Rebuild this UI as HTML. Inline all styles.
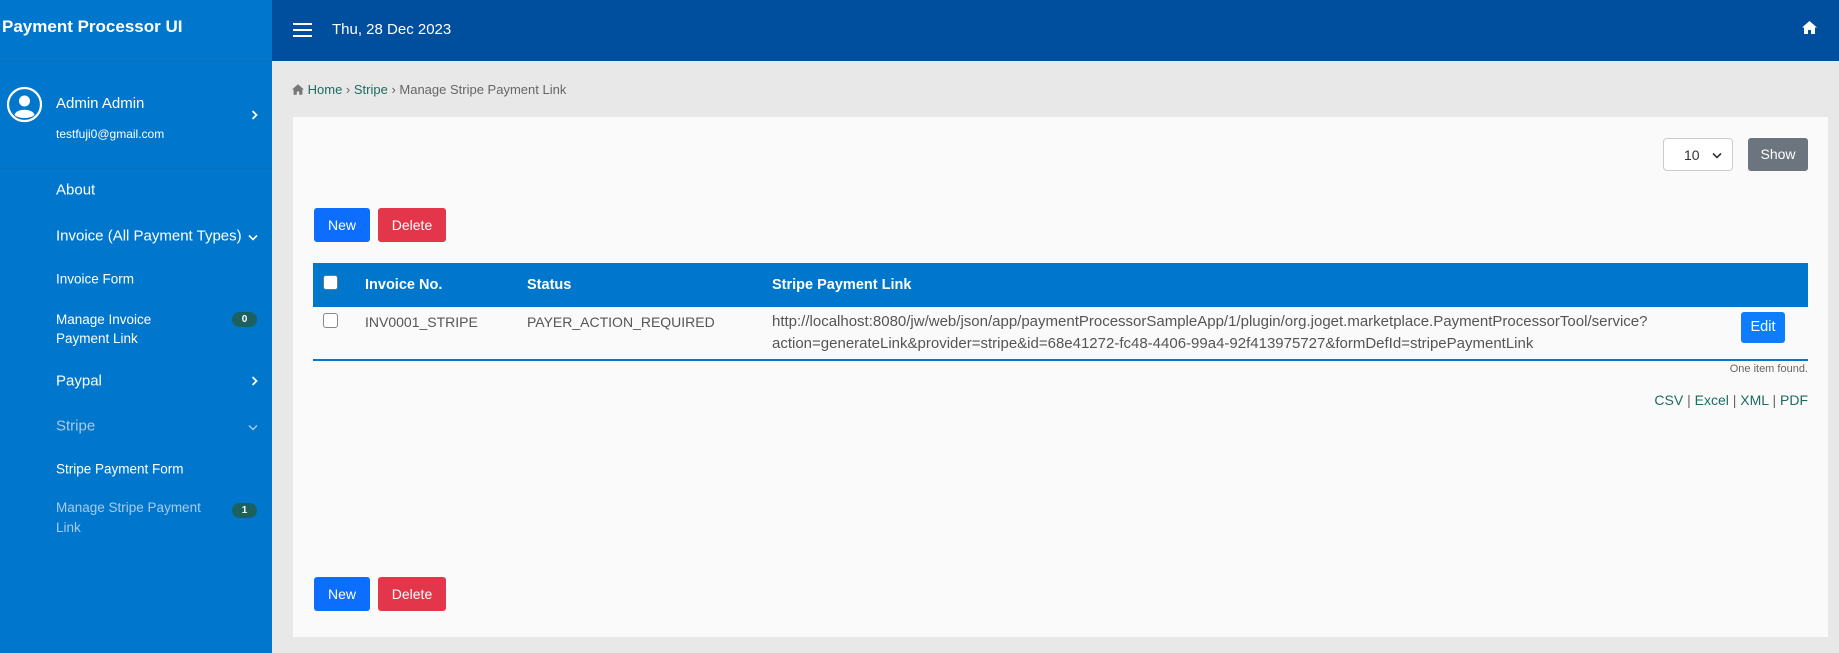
<!DOCTYPE html>
<html><head><meta charset="utf-8"><style>
*{box-sizing:border-box;margin:0;padding:0}
body{width:1839px;height:653px;overflow:hidden;font-family:"Liberation Sans",sans-serif;background:#e8e8e8;position:relative}
.abs{position:absolute;white-space:nowrap}
#side{position:absolute;left:0;top:0;width:272px;height:653px;background:#0077cc;color:#fff}
#top{position:absolute;left:272px;top:0;right:0;height:61px;background:#004e9e;color:#fff}
.mi{position:absolute;left:56px;font-size:15px;color:#fff;transform:translateY(-50%)}
.sub{font-size:13.5px}
.badge{position:absolute;left:232px;width:25px;height:15px;border-radius:8px;background:#1d6060;color:#fff;font-size:10px;font-weight:bold;text-align:center;line-height:15px}
.btn{position:absolute;color:#fff;font-size:14px;text-align:center;border-radius:3px}
.card{position:absolute;left:293px;top:117px;width:1535px;height:520px;background:#fafafa}
.th{position:absolute;top:285px;font-size:14.5px;font-weight:bold;color:#fff;transform:translateY(-50%)}
.td{position:absolute;font-size:14px;color:#555;transform:translateY(-50%)}
.cb{position:absolute;width:15px;height:15px;border:1px solid #777;border-radius:3px;background:#fff}
.chev{position:absolute}
a{color:#1f6b5e;text-decoration:none}
</style></head><body>
<div id="side">
 <div class="abs" style="left:2px;top:17px;font-size:17px;font-weight:bold">Payment Processor UI</div>
 <div style="position:absolute;left:0;top:61px;width:272px;height:1px;background:#0a6fc0"></div>
 <svg class="abs" style="left:6px;top:86px" width="37" height="37" viewBox="0 0 37 37"><circle cx="18.5" cy="18.5" r="16.5" fill="none" stroke="#fff" stroke-width="2.2"/><circle cx="18.5" cy="15" r="5.5" fill="#fff"/><path d="M8.5 29 C10 22 27 22 28.5 29 C24 33 13 33 8.5 29Z" fill="#fff"/></svg>
 <div class="abs" style="left:56px;top:95px;font-size:15px">Admin Admin</div>
 <div class="abs" style="left:56px;top:127px;font-size:12px">testfuji0@gmail.com</div>
 <svg class="chev" style="left:251px;top:110px" width="7" height="10"><path d="M1.5 1 L5.5 5 L1.5 9" fill="none" stroke="#fff" stroke-width="1.8"/></svg>
 <div style="position:absolute;left:0;top:168px;width:272px;height:1px;background:#0a6fc0"></div>
 <div class="mi" style="top:190px">About</div>
 <div class="mi" style="top:236px">Invoice (All Payment Types)</div>
 <svg class="chev" style="left:248px;top:234px" width="10" height="7"><path d="M1 1.5 L5 5.5 L9 1.5" fill="none" stroke="#fff" stroke-width="1.6"/></svg>
 <div class="mi sub" style="top:279px">Invoice Form</div>
 <div class="mi sub" style="top:329px;line-height:19px">Manage Invoice<br>Payment Link</div>
 <div class="badge" style="top:312px">0</div>
 <div class="mi" style="top:381px">Paypal</div>
 <svg class="chev" style="left:251px;top:376px" width="7" height="10"><path d="M1.5 1 L5.5 5 L1.5 9" fill="none" stroke="#fff" stroke-width="1.8"/></svg>
 <div class="mi" style="top:426px;color:#a9cbe6">Stripe</div>
 <svg class="chev" style="left:248px;top:424px" width="10" height="7"><path d="M1 1.5 L5 5.5 L9 1.5" fill="none" stroke="#a9cbe6" stroke-width="1.4"/></svg>
 <div class="mi sub" style="top:469px">Stripe Payment Form</div>
 <div class="mi sub" style="top:518px;line-height:20px;color:#a9cbe6">Manage Stripe Payment<br>Link</div>
 <div class="badge" style="top:503px">1</div>
</div>
<div id="top">
 <svg class="abs" style="left:21px;top:22px" width="19" height="15"><rect y="1" width="19" height="2" fill="#fff"/><rect y="7" width="19" height="2" fill="#fff"/><rect y="13" width="19" height="2" fill="#fff"/></svg>
 <div class="abs" style="left:60px;top:21px;font-size:15px">Thu, 28 Dec 2023</div>
 <svg class="abs" style="left:1530px;top:21px" width="15" height="13" viewBox="0 0 15 13"><path d="M7.5 0 L15 6.5 L13 6.5 L13 13 L9 13 L9 9 L6 9 L6 13 L2 13 L2 6.5 L0 6.5Z" fill="#fff"/></svg>
</div>
<div class="abs" style="left:292px;top:82px;font-size:13px;color:#666"><svg width="12" height="11" viewBox="0 0 15 13" style="vertical-align:-1px"><path d="M7.5 0 L15 6.5 L13 6.5 L13 13 L9 13 L9 9 L6 9 L6 13 L2 13 L2 6.5 L0 6.5Z" fill="#777"/></svg> <a>Home</a> › <a>Stripe</a> › Manage Stripe Payment Link</div>
<div class="card"></div>
<div class="abs" style="left:1663px;top:138px;width:70px;height:33px;border:1px solid #ccc;border-radius:4px;background:#fff;font-size:14px;color:#333;padding:8px 0 0 20px">10<svg style="position:absolute;right:10px;top:13px" width="10" height="7"><path d="M1 1.5 L5 5.5 L9 1.5" fill="none" stroke="#333" stroke-width="1.6"/></svg></div>
<div class="btn" style="left:1748px;top:138px;width:60px;height:33px;line-height:33px;background:#6c757d">Show</div>
<div class="btn" style="left:314px;top:208px;width:56px;height:34px;line-height:34px;background:#0d6efd">New</div>
<div class="btn" style="left:378px;top:208px;width:68px;height:34px;line-height:34px;background:#e3364a">Delete</div>
<div style="position:absolute;left:313px;top:263px;width:1495px;height:44px;background:#0077cc"></div>
<div class="cb" style="left:323px;top:275px"></div>
<div class="th" style="left:365px">Invoice No.</div>
<div class="th" style="left:527px">Status</div>
<div class="th" style="left:772px">Stripe Payment Link</div>
<div class="cb" style="left:323px;top:313px;border-color:#888"></div>
<div class="td" style="top:322px;left:365px">INV0001_STRIPE</div>
<div class="td" style="top:322px;left:527px">PAYER_ACTION_REQUIRED</div>
<div class="td" style="top:333px;left:772px;line-height:22px;white-space:nowrap;font-size:15px">http://localhost:8080/jw/web/json/app/paymentProcessorSampleApp/1/plugin/org.joget.marketplace.PaymentProcessorTool/service?<br>action=generateLink&amp;provider=stripe&amp;id=68e41272-fc48-4406-99a4-92f413975727&amp;formDefId=stripePaymentLink</div>
<div class="btn" style="left:1741px;top:312px;width:44px;height:31px;line-height:31px;background:#0d7dfd;font-size:14.5px">Edit</div>
<div style="position:absolute;left:313px;top:359px;width:1495px;height:2px;background:#0077cc"></div>
<div class="abs" style="right:31px;top:363px;font-size:11px;color:#666">One item found.</div>
<div class="abs" style="right:31px;top:392px;font-size:14px;color:#666"><a>CSV</a> | <a>Excel</a> | <a>XML</a> | <a>PDF</a></div>
<div class="btn" style="left:314px;top:577px;width:56px;height:34px;line-height:34px;background:#0d6efd">New</div>
<div class="btn" style="left:378px;top:577px;width:68px;height:34px;line-height:34px;background:#e3364a">Delete</div>
</body></html>
